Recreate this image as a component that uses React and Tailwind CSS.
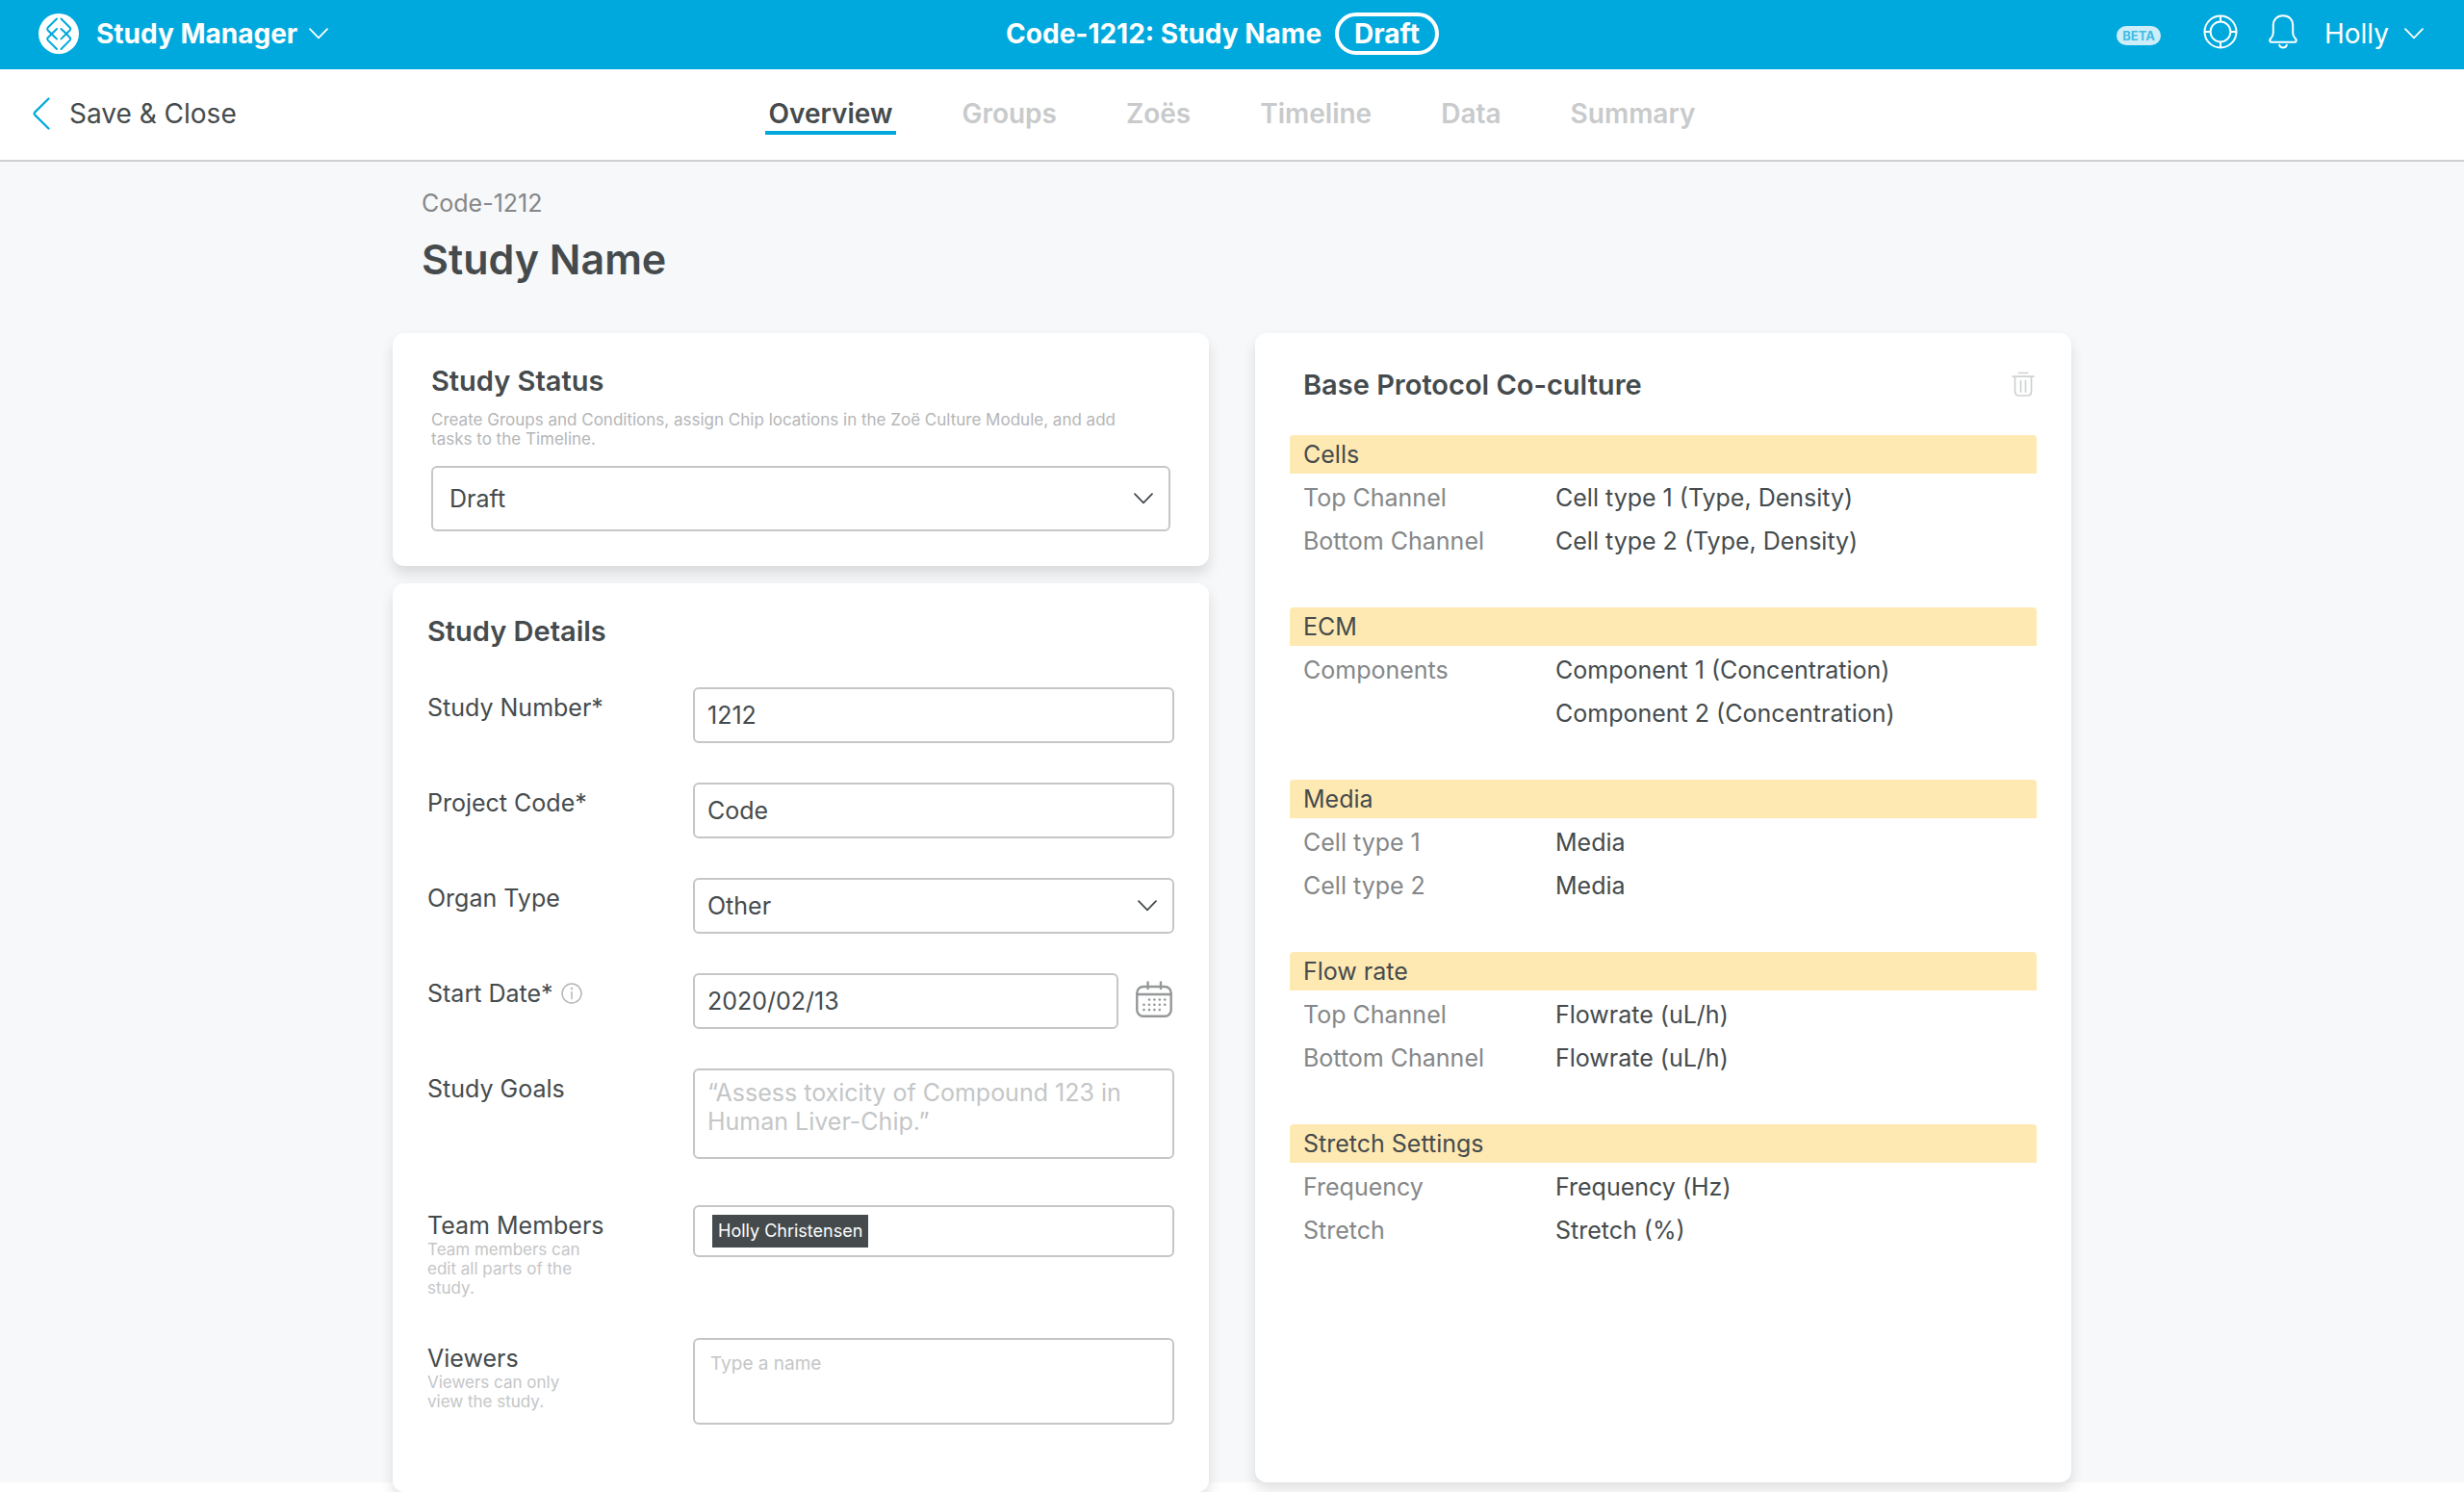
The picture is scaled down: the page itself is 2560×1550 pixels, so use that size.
import React from "react";

function Chevron({ className = "" }) {
  return (
    <svg viewBox="0 0 20 12" fill="none" stroke="currentColor" strokeWidth="1.8" strokeLinecap="round" strokeLinejoin="round" className={`h-3 w-5 shrink-0 ${className}`} aria-hidden="true">
      <path d="M1 1.2 10 10.3 19 1.2" />
    </svg>
  );
}

function Logo() {
  return (
    <svg viewBox="0 0 42 42" className="size-[42px] shrink-0" aria-hidden="true">
      <circle cx="21" cy="21" r="21" fill="#fff" />
      <g fill="none" stroke="#00a9dd" strokeWidth="2" strokeLinecap="round" strokeLinejoin="round">
        <path d="M19 5.5 9.6 14.8Q8.6 16 9.6 17.2L13 20.8" />
        <path d="M23.5 5.5 32.8 14.8Q33.8 16 32.8 17.2L23.5 26.4" />
        <path d="M19 37 9.6 27.6Q8.6 26.4 9.6 25.2L19 16" />
        <path d="M23.5 37 32.8 27.6Q33.8 26.4 32.8 25.2L29.4 21.6" />
        <path d="M19 26.4 13 20.8M23.5 16 29.4 21.6" />
      </g>
    </svg>
  );
}

function LifeBuoy() {
  return (
    <svg viewBox="0 0 36 36" fill="none" stroke="currentColor" strokeWidth="2" className="size-9" aria-hidden="true">
      <circle cx="18" cy="18" r="16.5" />
      <circle cx="18" cy="18" r="10.4" />
      <path d="M18 1.5v6.1M18 28.4v6.1M1.5 18h6.1M28.4 18h6.1" />
    </svg>
  );
}

function Bell() {
  return (
    <svg viewBox="0 0 30 36" fill="none" stroke="currentColor" strokeWidth="2" strokeLinecap="round" strokeLinejoin="round" className="h-9 w-[30px]" aria-hidden="true">
      <path d="M15 1.2C8.6 1.2 4.8 5.6 4.8 11.5V19c0 3.4-1 4.2-2.6 6-1.8 2-.8 3.8.8 3.8h24c1.6 0 2.6-1.8.8-3.8-1.6-1.8-2.6-2.6-2.6-6v-7.5C25.2 5.6 21.4 1.2 15 1.2Z" />
      <path d="M11.2 31.8c.6 1.6 2 2.6 3.8 2.6s3.2-1 3.8-2.6" />
    </svg>
  );
}

function Trash() {
  return (
    <svg viewBox="0 0 24 26" fill="none" stroke="currentColor" className="h-[26px] w-6" aria-hidden="true">
      <path d="M6.5 1.5h11M0.5 5.2h23" strokeWidth="1.7" />
      <path d="M3.5 5.5V20.5q0 4.5 4.5 4.5h8q4.5 0 4.5-4.5V5.5" strokeWidth="1.7" />
      <path d="M9.5 9.5v11.5M14.5 9.5v11.5" strokeWidth="1.7" strokeLinecap="round" />
    </svg>
  );
}

const calendarDots = [
  [14, 19.5], [19.4, 19.5], [24.8, 19.5], [30.2, 19.5],
  [8.5, 24.8], [14, 24.8], [19.4, 24.8], [24.8, 24.8], [30.2, 24.8],
  [8.5, 30.1], [14, 30.1], [19.4, 30.1], [24.8, 30.1],
];

function Calendar() {
  return (
    <svg viewBox="0 0 38 38" fill="none" stroke="currentColor" strokeWidth="2.4" strokeLinecap="round" className="size-[38px]" aria-hidden="true">
      <rect x="1.3" y="6" width="35.4" height="30.7" rx="6.5" />
      <path d="M1.5 14h35M12.6 1.5V8M26 1.5V8" />
      {calendarDots.map(([x, y]) => (
        <circle key={`${x}-${y}`} cx={x} cy={y} r="1.3" fill="currentColor" stroke="none" />
      ))}
    </svg>
  );
}

function Info() {
  return (
    <svg viewBox="0 0 22 22" fill="none" stroke="currentColor" strokeWidth="1.5" strokeLinecap="round" className="size-[22px]" aria-hidden="true">
      <circle cx="11" cy="11" r="10" />
      <path d="M11 9.5v7" />
      <circle cx="11" cy="6" r="1.2" fill="currentColor" stroke="none" />
    </svg>
  );
}

const tabs = ["Overview", "Groups", "Zoës", "Timeline", "Data", "Summary"];

const protocol = [
  { title: "Cells", rows: [["Top Channel", "Cell type 1 (Type, Density)"], ["Bottom Channel", "Cell type 2 (Type, Density)"]] },
  { title: "ECM", rows: [["Components", "Component 1 (Concentration)"], ["", "Component 2 (Concentration)"]] },
  { title: "Media", rows: [["Cell type 1", "Media"], ["Cell type 2", "Media"]] },
  { title: "Flow rate", rows: [["Top Channel", "Flowrate (uL/h)"], ["Bottom Channel", "Flowrate (uL/h)"]] },
  { title: "Stretch Settings", rows: [["Frequency", "Frequency (Hz)"], ["Stretch", "Stretch (%)"]] },
];

const card = "rounded-xl bg-white shadow-[0_8px_14px_rgba(0,0,0,0.12)]";
const heading = "text-[29px] leading-10 font-semibold";
const field = "block w-full rounded-md border-2 border-[#c4c6c7] bg-white text-[25px] leading-[30px] text-[#454b4d] placeholder:text-[#c4c6c7] outline-none focus:border-[#00a9dd]";

function Select({ id, options, className }) {
  return (
    <div className="relative">
      <select id={id} className={`appearance-none ${field} ${className}`}>
        {options.map((o) => <option key={o}>{o}</option>)}
      </select>
      <Chevron className="pointer-events-none absolute top-1/2 right-[18px] -translate-y-1/2" />
    </div>
  );
}

function Row({ id, label, hint, info, children, className = "" }) {
  return (
    <div className={`flex items-start ${className}`}>
      <div className="w-[276px] shrink-0 pt-1.5">
        <div className="flex items-center gap-2">
          <label htmlFor={id} className="text-[25px] leading-[30px]">{label}</label>
          {info && (
            <button type="button" aria-label="About the start date" className="text-[#b4b6b7]"><Info /></button>
          )}
        </div>
        {hint && <p className="w-[176px] text-[17px] leading-5 text-[#c4c6c7]">{hint}</p>}
      </div>
      <div className="min-w-0 flex-1">{children}</div>
    </div>
  );
}

function TopBar() {
  return (
    <header className="grid h-[72px] grid-cols-[1fr_auto_1fr] items-center bg-[#00a9dd] pb-0.5 text-[28px] leading-8 text-white">
      <div className="flex items-center gap-[18px] pl-10">
        <Logo />
        <button type="button" className="flex items-center gap-3 font-bold">
          Study Manager <Chevron />
        </button>
      </div>
      <div className="flex items-center gap-3.5 pr-5 font-bold">
        <span>Code-1212: Study Name</span>
        <span className="flex h-11 items-center rounded-full border-4 border-white px-4">Draft</span>
      </div>
      <div className="flex items-center justify-end pr-[42px]">
        <span className="mt-1 mr-11 rounded-full bg-[#cdeef8] px-1.5 text-[13px] leading-5 font-bold text-[#3fbde5]">BETA</span>
        <button type="button" aria-label="Help" className="mr-8 mb-1"><LifeBuoy /></button>
        <button type="button" aria-label="Notifications" className="mr-7 mb-1"><Bell /></button>
        <button type="button" className="flex items-center gap-4">Holly <Chevron /></button>
      </div>
    </header>
  );
}

function SubBar() {
  return (
    <div className="grid h-24 grid-cols-[1fr_auto_1fr] items-center border-b-2 border-[#cfd0d1] bg-white text-[28px] leading-8">
      <a href="#close" className="flex items-center gap-5 pb-0.5 pl-[34px]">
        <svg viewBox="0 0 18 34" fill="none" stroke="#00a9dd" strokeWidth="2.2" strokeLinecap="round" className="h-[34px] w-[18px]" aria-hidden="true">
          <path d="M16.5 1.5 2.2 15.6Q1 17 2.2 18.4L16.5 32.5" />
        </svg>
        Save &amp; Close
      </a>
      <nav className="flex gap-16 font-semibold">
        {tabs.map((tab, i) => (
          <a
            key={tab}
            href={`#${tab.toLowerCase()}`}
            aria-current={i === 0 ? "page" : undefined}
            className={i === 0 ? "border-b-4 border-[#00a9dd] px-1 pt-1 pb-0.5" : "border-b-4 border-transparent px-1 pt-1 pb-0.5 text-[#c8cacb]"}
          >
            {tab}
          </a>
        ))}
      </nav>
      <div />
    </div>
  );
}

export default function App() {
  return (
    <div className="bg-white font-[Inter,sans-serif] text-[#454b4d]">
      <TopBar />
      <SubBar />
      <main className="bg-[linear-gradient(to_bottom,#f7f8fa_calc(100%-10px),#fff_calc(100%-10px))]">
        <div className="mx-auto max-w-[1744px]">
          <div className="px-[30px] pt-7 pb-12">
            <p className="text-[25px] leading-[30px] text-[#858788]">Code-1212</p>
            <h1 className="mt-3.5 text-[43px] leading-[58px] font-semibold">Study Name</h1>
          </div>
          <div className="grid grid-cols-2 gap-12">
            <div className="flex flex-col gap-[18px]">
              <section className={`${card} px-10 pt-[30px] pb-9`}>
                <h2 className={heading}><label htmlFor="status">Study Status</label></h2>
                <p className="mt-2.5 mb-[18px] text-[17px] leading-5 text-[#b4b6b7]">
                  Create Groups and Conditions, assign Chip locations in the Zoë Culture Module, and add<br />
                  tasks to the Timeline.
                </p>
                <Select id="status" options={["Draft", "Active", "Complete"]} className="h-[68px] px-[17px]" />
              </section>

              <section className={`${card} px-9 pt-[30px] pb-[70px]`}>
                <h2 className={heading}>Study Details</h2>
                <form className="mt-[38px]">
                  <div className="flex flex-col gap-[41px]">
                    <Row id="number" label="Study Number*">
                      <input id="number" defaultValue="1212" className={`${field} h-[58px] px-[13px]`} />
                    </Row>
                    <Row id="project" label="Project Code*">
                      <input id="project" defaultValue="Code" className={`${field} h-[58px] px-[13px]`} />
                    </Row>
                    <Row id="organ" label="Organ Type">
                      <Select id="organ" options={["Other", "Liver", "Kidney"]} className="h-[58px] px-[13px]" />
                    </Row>
                    <Row id="date" label="Start Date*" info>
                      <div className="flex items-center gap-[18px]">
                        <input id="date" defaultValue="2020/02/13" className={`${field} h-[58px] px-[13px]`} />
                        <button type="button" aria-label="Pick a date" className="mr-0.5 mb-1 text-[#959799]"><Calendar /></button>
                      </div>
                    </Row>
                    <Row id="goals" label="Study Goals">
                      <textarea id="goals" placeholder="“Assess toxicity of Compound 123 in Human Liver-Chip.”" className={`${field} h-[94px] resize-none overflow-hidden px-[13px] py-2`} />
                    </Row>
                  </div>
                  <Row id="team" label="Team Members" hint="Team members can edit all parts of the study." className="mt-12">
                    <div className="flex h-[54px] items-center gap-2 rounded-md border-2 border-[#c4c6c7] px-[18px]">
                      <span className="shrink-0 bg-[#454b4d] px-1.5 text-[18px] leading-[34px] text-white">Holly Christensen</span>
                      <input id="team" className="h-9 w-full min-w-0 outline-none" />
                    </div>
                  </Row>
                  <Row id="viewers" label="Viewers" hint="Viewers can only view the study." className="mt-[42px]">
                    <textarea id="viewers" placeholder="Type a name" className="block h-[90px] w-full resize-none overflow-hidden rounded-md border-2 border-[#c4c6c7] px-4 py-2.5 text-[19px] leading-[30px] outline-none placeholder:text-[#c4c6c7]" />
                  </Row>
                </form>
              </section>
            </div>

            <section className={`${card} mb-2.5 px-9 pt-[34px]`}>
              <div className="flex items-center justify-between pr-0.5 pl-3.5">
                <h2 className={heading}>Base Protocol Co-culture</h2>
                <button type="button" aria-label="Delete protocol" className="mb-0.5 text-[#cfd1d2]"><Trash /></button>
              </div>
              <div className="mt-8 flex flex-col gap-[46px] text-[25px]">
                {protocol.map(({ title, rows }) => (
                  <section key={title}>
                    <h3 className="rounded-t-sm bg-[#ffe9b3] px-3.5 leading-10">{title}</h3>
                    <dl className="px-3.5 pt-[3px]">
                      {rows.map(([term, value]) => (
                        <div key={value + term} className="flex leading-[45px]">
                          <dt className="w-[262px] shrink-0 text-[#858788]">{term}</dt>
                          <dd>{value}</dd>
                        </div>
                      ))}
                    </dl>
                  </section>
                ))}
              </div>
            </section>
          </div>
        </div>
      </main>
    </div>
  );
}
